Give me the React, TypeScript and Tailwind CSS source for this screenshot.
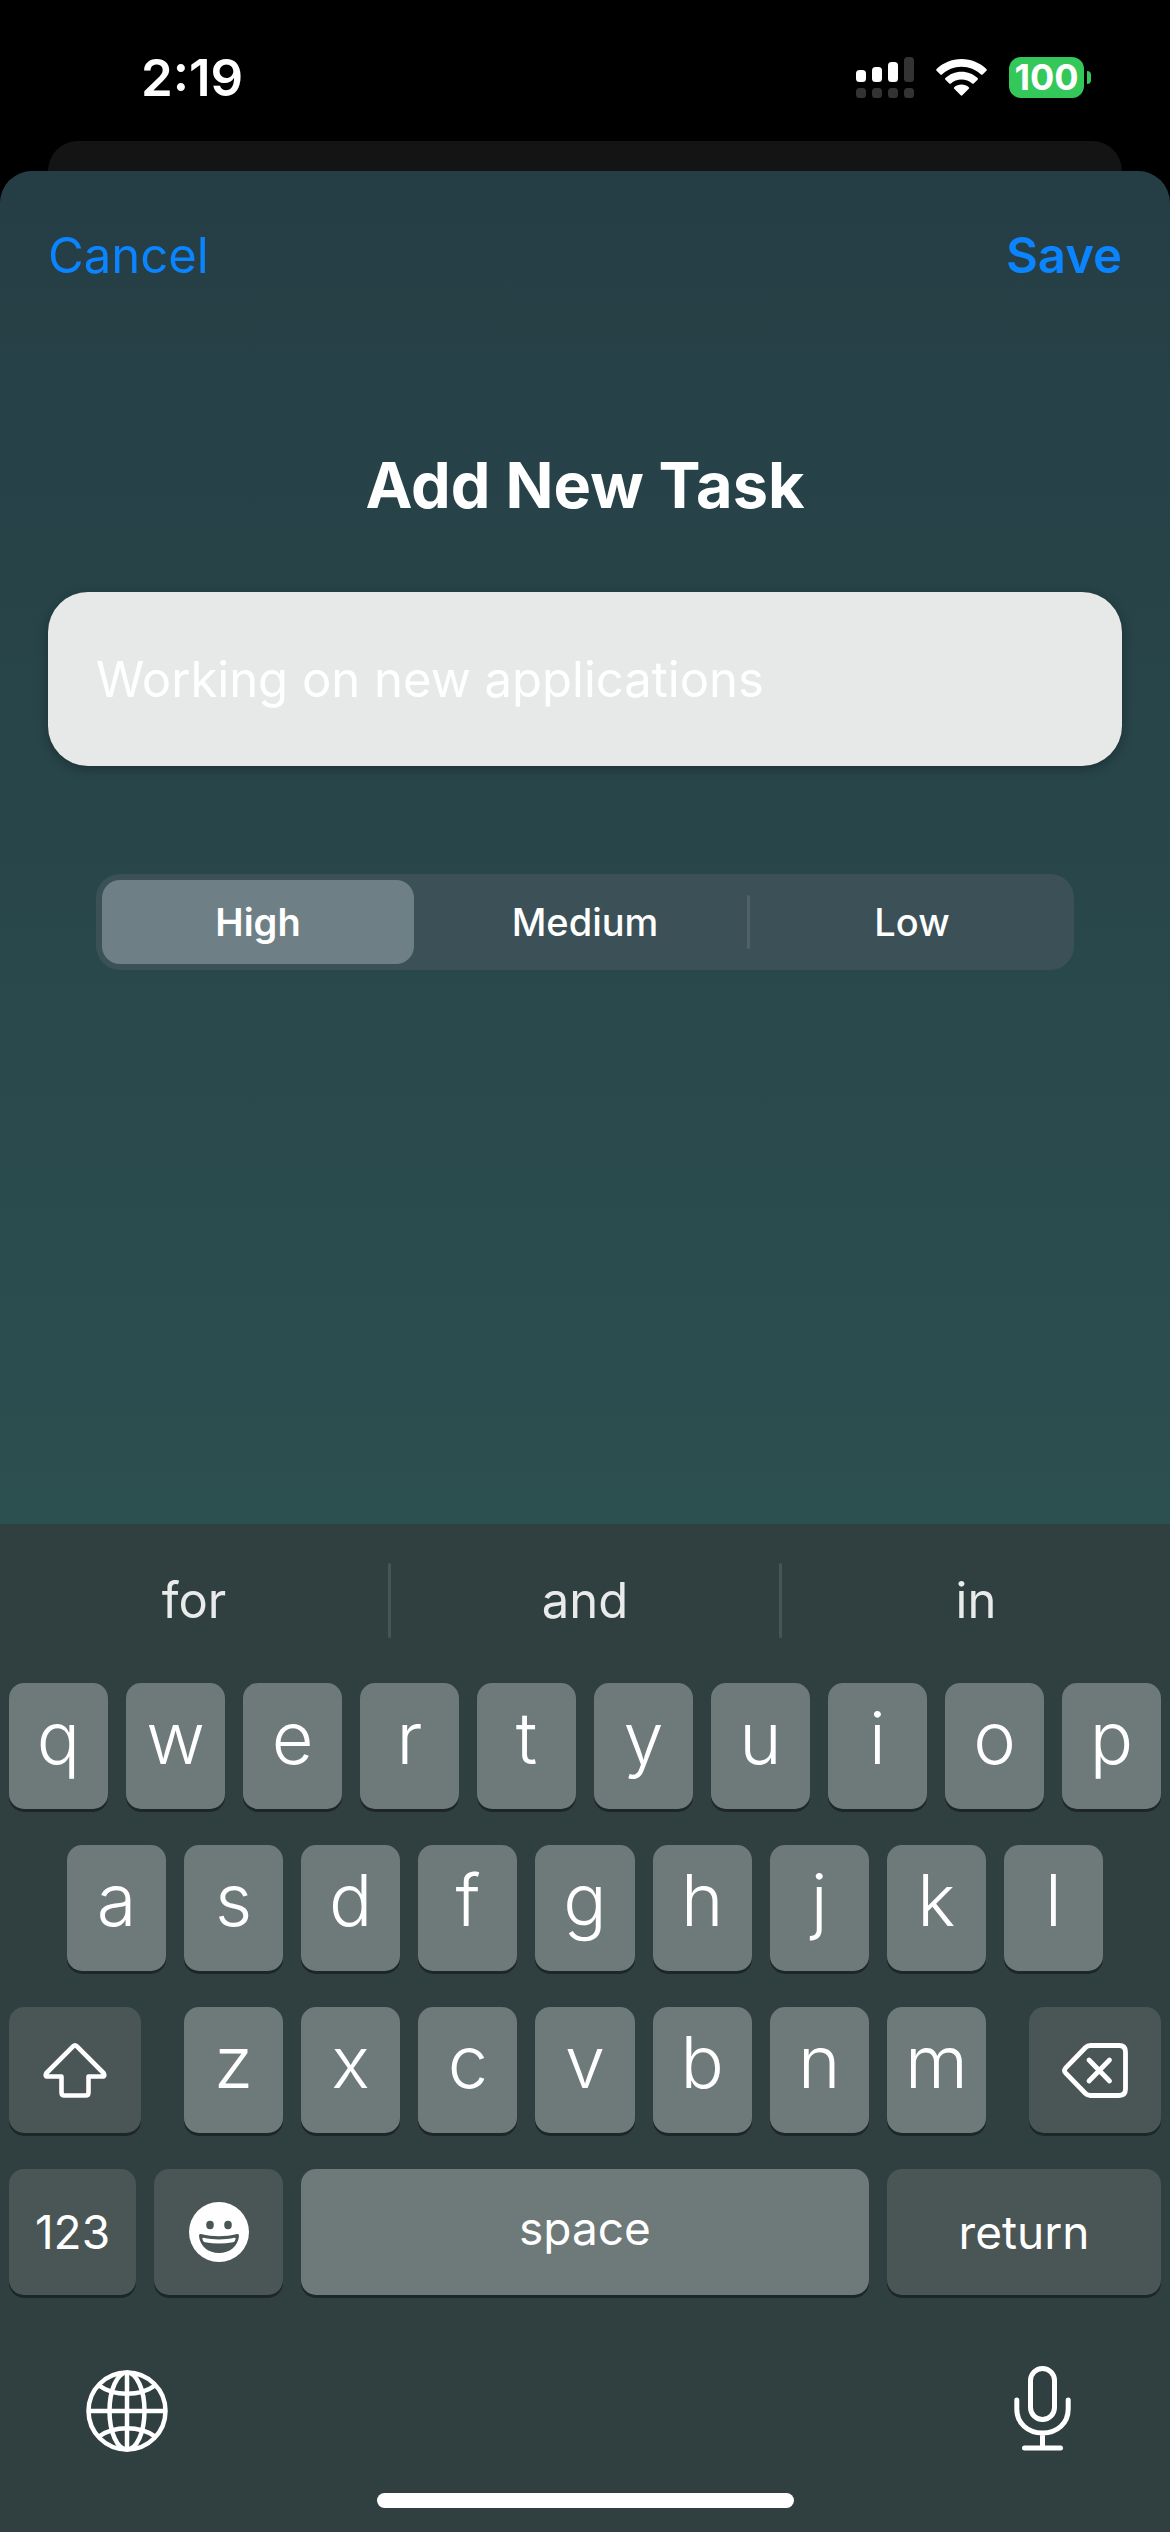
import React, { useState } from "react";

const keyBase =
  "flex h-[126px] items-center justify-center rounded-[15px] text-white shadow-[0_3px_0_#1e2727]";
const lightKey = "bg-[#6e7979]";
const darkKey = "bg-[#4a5555]";

function LetterKey({ label }: { label: string }) {
  return (
    <button
      type="button"
      className={`${keyBase} ${lightKey} min-w-0 flex-1 pb-4 text-[72px] leading-[90px] font-[350]`}
    >
      {label}
    </button>
  );
}

function Letters({ keys }: { keys: string }) {
  return (
    <>
      {keys.split("").map((k) => (
        <LetterKey key={k} label={k} />
      ))}
    </>
  );
}

function StatusBar() {
  return (
    <div className="flex h-[141px] items-start justify-between pt-[57px] pr-[79px] pl-[141px]">
      <span className="text-[51px] leading-[42px] font-semibold">2:19</span>
      <div className="flex items-start">
        <svg width="58" height="41" viewBox="0 0 58 41" aria-label="Signal">
          <g fill="#fff">
            <rect x="0" y="13" width="10" height="12" rx="3.5" />
            <rect x="16" y="10" width="10" height="15" rx="3.5" />
            <rect x="32" y="5" width="10" height="20" rx="3.5" />
          </g>
          <g fill="#333333">
            <rect x="48" y="0" width="10" height="25" rx="3.5" />
            <rect x="0" y="31" width="10" height="10" rx="3.5" />
            <rect x="16" y="31" width="10" height="10" rx="3.5" />
            <rect x="32" y="31" width="10" height="10" rx="3.5" />
            <rect x="48" y="31" width="10" height="10" rx="3.5" />
          </g>
        </svg>
        <svg className="ml-[22px]" width="51" height="41" viewBox="0 0 51 41" fill="#fff" aria-label="Wi-Fi">
          <path d="M25.500 2C35.300 2 44 5.800 50.400 12.100Q51.200 12.900 50.400 13.700L46.600 17.500Q45.800 18.200 45 17.500C39.900 12.600 33 9.700 25.500 9.700S11.100 12.600 6 17.500Q5.200 18.200 4.400 17.500L.600 13.700Q-.200 12.900 .600 12.100C7 5.800 15.700 2 25.500 2Z" />
          <path d="M25.500 14.800C31.800 14.800 37.400 17.200 41.600 21.100Q42.400 21.900 41.600 22.700L37.700 26.500Q36.900 27.200 36.100 26.500C33.300 24 29.600 22.500 25.500 22.500S17.700 24 14.900 26.500Q14.100 27.200 13.300 26.500L9.400 22.700Q8.600 21.900 9.400 21.100C13.600 17.200 19.200 14.800 25.500 14.800Z" />
          <path d="M25.500 27.500C28.300 27.500 30.800 28.500 32.800 30.200Q33.600 31 32.800 31.800L26.300 38.300Q25.500 39 24.700 38.300L18.200 31.800Q17.400 31 18.200 30.200C20.200 28.500 22.700 27.500 25.500 27.500Z" />
        </svg>
        <div className="ml-[22px] flex items-center gap-[3px]">
          <div className="flex h-[41px] w-[75px] items-center justify-center rounded-[12px] bg-[#34c759] text-[36px] leading-[41px] font-bold">
            100
          </div>
          <div className="h-[13px] w-[4px] rounded-r-full bg-[#34c759]" />
        </div>
      </div>
    </div>
  );
}

const priorities = ["High", "Medium", "Low"];

function PriorityPicker() {
  const [selected, setSelected] = useState("High");
  const selectedIndex = priorities.indexOf(selected);
  return (
    <div
      role="radiogroup"
      aria-label="Priority"
      className="mx-12 mt-[108px] flex h-24 rounded-[24px] bg-[#3b5157] p-1.5"
    >
      {priorities.map((p, i) => (
        <React.Fragment key={p}>
          {i > 0 && (
            <span
              className={`mx-1.5 h-[54px] w-[3px] self-center rounded-full ${
                i === selectedIndex || i - 1 === selectedIndex ? "bg-transparent" : "bg-[#4e6267]"
              }`}
            />
          )}
          <label
            className={`flex flex-1 cursor-pointer items-center justify-center rounded-[18px] text-[38px] leading-[48px] ${
              p === selected ? "bg-[#6e8086] font-semibold" : "font-medium"
            }`}
          >
            <input
              type="radio"
              name="priority"
              value={p}
              checked={p === selected}
              onChange={() => setSelected(p)}
              className="sr-only"
            />
            {p}
          </label>
        </React.Fragment>
      ))}
    </div>
  );
}

function ShiftIcon() {
  return (
    <svg width="64" height="57" viewBox="0 0 64 57" fill="none" stroke="#fff" strokeWidth="4.6" strokeLinejoin="round" aria-hidden="true">
      <path d="M30.300 4.200Q32 2.500 33.700 4.200L60.500 31Q62.500 34.500 59.500 34.500H45.500V50.500Q45.500 53.500 42.500 53.500H21.500Q18.500 53.500 18.500 50.500V34.500H4.500Q1.500 34.500 3.500 31Z" />
    </svg>
  );
}

function DeleteIcon() {
  return (
    <svg width="66" height="55" viewBox="0 0 66 55" fill="none" stroke="#fff" strokeWidth="4.800" strokeLinejoin="round" strokeLinecap="round" aria-hidden="true">
      <path d="M28.500 2.500H57Q63.500 2.500 63.500 9V46Q63.500 52.500 57 52.500H28.500Q25.500 52.500 23.500 50.500L3.500 29.800Q1.500 27.500 3.500 25.200L23.500 4.500Q25.500 2.500 28.500 2.500Z" />
      <path d="M27 17L47.500 38M47.500 17L27 38" />
    </svg>
  );
}

function EmojiIcon() {
  return (
    <svg width="60" height="60" viewBox="0 0 60 60" aria-hidden="true">
      <circle cx="30" cy="30" r="30" fill="#fff" />
      <g fill="#4a5555">
        <ellipse cx="21" cy="23" rx="3.800" ry="4.200" />
        <ellipse cx="39" cy="23" rx="3.800" ry="4.200" />
        <path d="M12 32Q9.800 31.500 10 34C11 44.500 19.500 51 30 51S49 44.500 50 34Q50.200 31.500 48 32C36 35 24 35 12 32Z" />
      </g>
      <path d="M14.500 35.700C24.500 38 35.500 38 45.500 35.700Q47.300 35.500 46.500 37.300L45.800 39Q45.300 40 44 40.300C34.500 42 25.500 42 16 40.300Q14.700 40 14.200 39L13.500 37.300Q12.700 35.500 14.500 35.700Z" fill="#fff" />
    </svg>
  );
}

function GlobeIcon() {
  return (
    <svg width="82" height="82" viewBox="0 0 82 82" fill="none" stroke="#fff" strokeWidth="4.500" aria-hidden="true">
      <circle cx="41" cy="41" r="38.500" />
      <ellipse cx="41" cy="41" rx="17.500" ry="38.500" />
      <path d="M41 2.500V79.500M2.500 41H79.500" />
      <path d="M13 15.500C28 26.500 54 26.500 69 15.500M13 66.500C28 55.500 54 55.500 69 66.500" />
    </svg>
  );
}

function MicIcon() {
  return (
    <svg width="57" height="86" viewBox="0 0 57 86" fill="none" stroke="#fff" strokeWidth="5" strokeLinecap="round" aria-hidden="true">
      <rect x="16.500" y="2.500" width="24" height="51" rx="12" />
      <path d="M2.800 34V43C2.800 57 13.500 67 28.500 67S54.200 57 54.200 43V34M28.500 67V82M10.500 82H46.500" />
    </svg>
  );
}

function Keyboard() {
  return (
    <div className="bg-[#303f40] pb-6 text-white">
      <div className="flex items-center pt-[39px]">
        {["for", "and", "in"].map((w, i) => (
          <React.Fragment key={w}>
            {i > 0 && <span className="h-[75px] w-[3px] rounded-full bg-[#465556]" />}
            <button type="button" className="h-[75px] flex-1 text-[49px] leading-[75px] text-[#e9ebeb]">
              {w}
            </button>
          </React.Fragment>
        ))}
      </div>
      <div className="mt-[45px] flex flex-col gap-9 px-[9px]">
        <div className="flex gap-[18px]">
          <Letters keys="qwertyuiop" />
        </div>
        <div className="flex gap-[18px] px-[58px]">
          <Letters keys="asdfghjkl" />
        </div>
        <div className="flex gap-[43px]">
          <button type="button" aria-label="Shift" className={`${keyBase} ${darkKey} w-[132px]`}>
            <ShiftIcon />
          </button>
          <div className="flex flex-1 gap-[18px]">
            <Letters keys="zxcvbnm" />
          </div>
          <button type="button" aria-label="Delete" className={`${keyBase} ${darkKey} w-[132px]`}>
            <DeleteIcon />
          </button>
        </div>
        <div className="flex gap-[18px]">
          <button type="button" className={`${keyBase} ${darkKey} w-[127px] text-[46px] leading-[60px]`}>
            123
          </button>
          <button type="button" aria-label="Emoji" className={`${keyBase} ${darkKey} w-[129px]`}>
            <EmojiIcon />
          </button>
          <button type="button" className={`${keyBase} ${lightKey} flex-1 pb-2 text-[46px] leading-[60px]`}>
            space
          </button>
          <button type="button" className={`${keyBase} ${darkKey} w-[274px] text-[46px] leading-[60px]`}>
            return
          </button>
        </div>
      </div>
      <div className="mt-[71px] flex items-center justify-between pr-[99px] pl-[86px]">
        <button type="button" aria-label="Next keyboard" className="pt-1">
          <GlobeIcon />
        </button>
        <button type="button" aria-label="Dictate">
          <MicIcon />
        </button>
      </div>
      <div className="mx-auto mt-[41px] h-[15px] w-[417px] rounded-full bg-white" />
    </div>
  );
}

export default function App() {
  return (
    <div className="flex min-h-screen flex-col bg-black font-['Inter','Liberation_Sans',sans-serif] text-white">
      <StatusBar />
      <div className="mx-12 h-[30px] rounded-t-[30px] bg-[#141414]" />
      <main className="flex flex-1 flex-col rounded-t-[32px] bg-linear-to-b from-[#253e45] to-[#2c4f50] px-12">
        <div className="flex items-center justify-between pt-[54px] text-[49px] leading-[62px] text-[#0a84ff]">
          <button type="button">Cancel</button>
          <button type="button" className="font-semibold">
            Save
          </button>
        </div>
        <h1 className="mt-[158px] text-center text-[63px] leading-[80px] font-bold">Add New Task</h1>
        <input
          type="text"
          aria-label="Task"
          placeholder="Working on new applications"
          className="mt-[67px] h-[174px] w-full rounded-[40px] bg-[#e7e9e9] px-12 text-[49px] text-[#26424a] shadow-[0_3px_12px_rgba(0,0,0,0.3)] outline-none placeholder:text-white"
        />
        <PriorityPicker />
      </main>
      <Keyboard />
    </div>
  );
}
